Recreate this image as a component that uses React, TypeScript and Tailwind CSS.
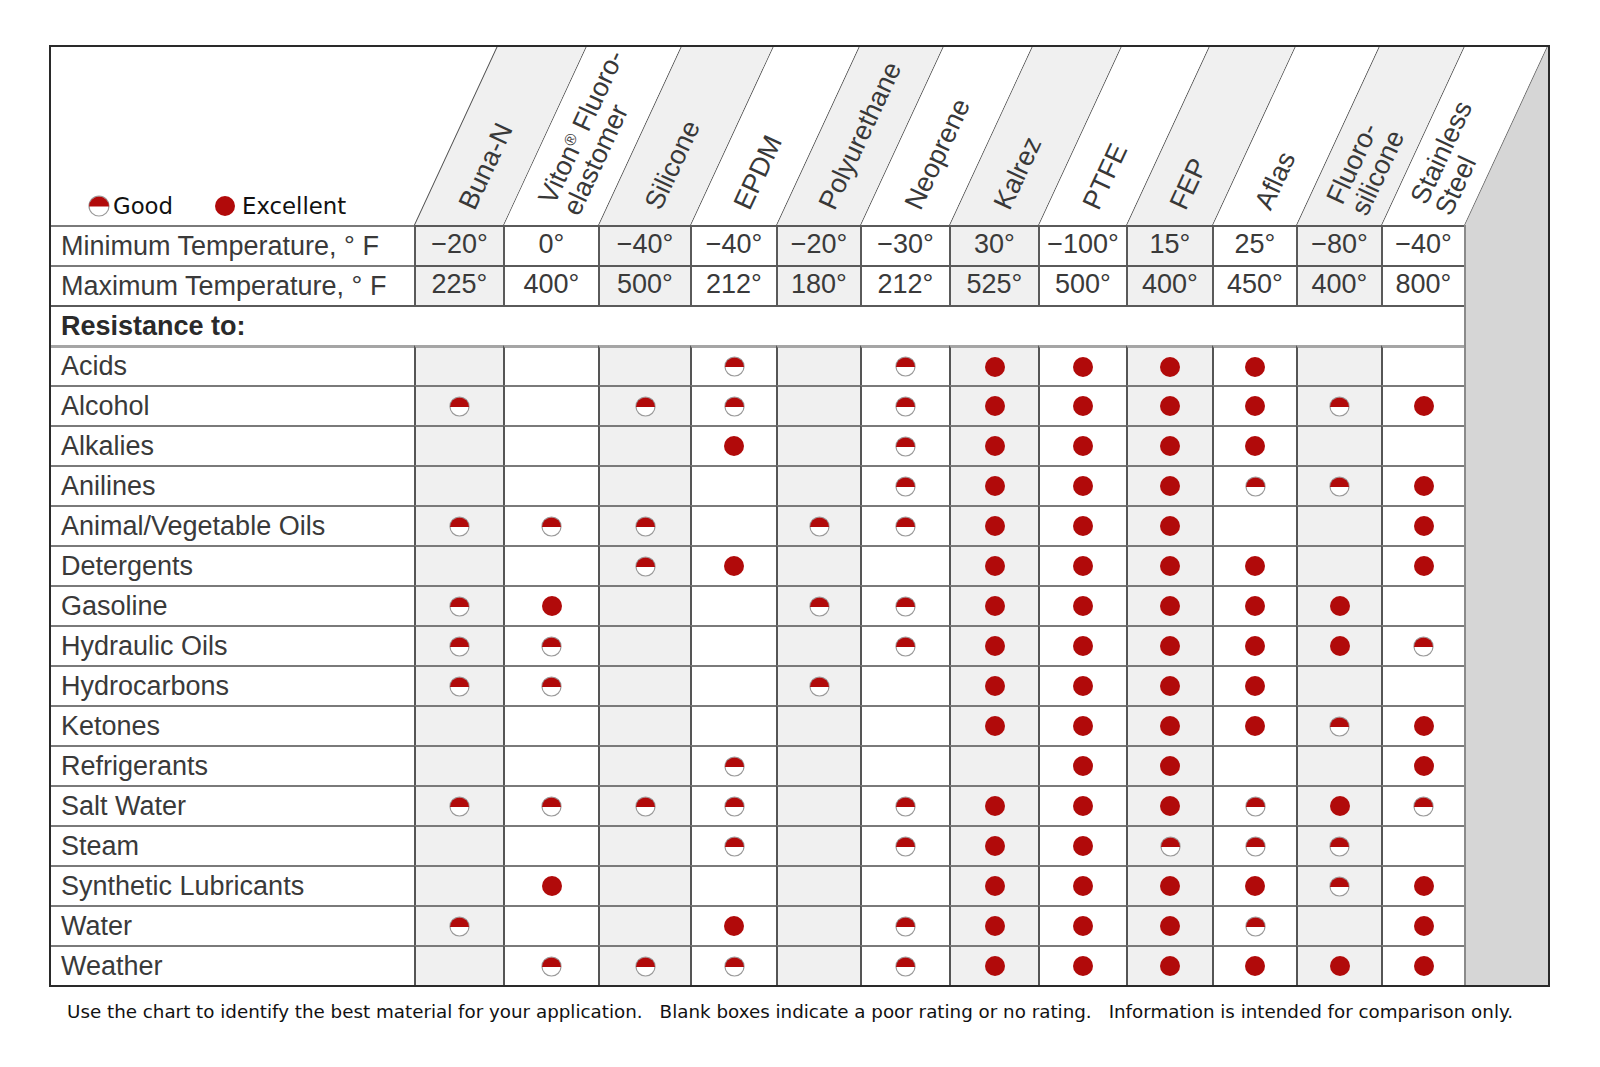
import type { ReactNode } from "react";

const RED = "#b10a0a";

type Column = {
  lines: ReactNode[];
  w: string;
  z: string;
  shade: boolean;
  min: string;
  max: string;
};

const columns: Column[] = [
  { lines: ["Buna-N"], w: "w-[89px]", z: "z-[12]", shade: true, min: "−20°", max: "225°" },
  {
    lines: [
      <>
        Viton<sup className="text-[16px]">®</sup> Fluoro-
      </>,
      "elastomer",
    ],
    w: "w-[95px]",
    z: "z-[11]",
    shade: false,
    min: "0°",
    max: "400°",
  },
  { lines: ["Silicone"], w: "w-[92px]", z: "z-[10]", shade: true, min: "−40°", max: "500°" },
  { lines: ["EPDM"], w: "w-[86px]", z: "z-[9]", shade: false, min: "−40°", max: "212°" },
  { lines: ["Polyurethane"], w: "w-[84px]", z: "z-[8]", shade: true, min: "−20°", max: "180°" },
  { lines: ["Neoprene"], w: "w-[89px]", z: "z-[7]", shade: false, min: "−30°", max: "212°" },
  { lines: ["Kalrez"], w: "w-[89px]", z: "z-[6]", shade: true, min: "30°", max: "525°" },
  { lines: ["PTFE"], w: "w-[88px]", z: "z-[5]", shade: false, min: "−100°", max: "500°" },
  { lines: ["FEP"], w: "w-[86px]", z: "z-[4]", shade: true, min: "15°", max: "400°" },
  { lines: ["Aflas"], w: "w-[84px]", z: "z-[3]", shade: false, min: "25°", max: "450°" },
  { lines: ["Fluoro-", "silicone"], w: "w-[85px]", z: "z-[2]", shade: true, min: "−80°", max: "400°" },
  { lines: ["Stainless", "Steel"], w: "w-[83px]", z: "z-[1]", shade: false, min: "−40°", max: "800°" },
];

// g = good, e = excellent, . = none
const rows: [string, string][] = [
  ["Acids", "...g.geeee.."],
  ["Alcohol", "g.gg.geeeege"],
  ["Alkalies", "...e.geeee.."],
  ["Anilines", ".....geeegge"],
  ["Animal/Vegetable Oils", "ggg.ggeee..e"],
  ["Detergents", "..ge..eeee.e"],
  ["Gasoline", "ge..ggeeeee."],
  ["Hydraulic Oils", "gg...geeeeeg"],
  ["Hydrocarbons", "gg..g.eeee.."],
  ["Ketones", "......eeeege"],
  ["Refrigerants", "...g...ee..e"],
  ["Salt Water", "gggg.geeegeg"],
  ["Steam", "...g.geeggg."],
  ["Synthetic Lubricants", ".e....eeeege"],
  ["Water", "g..e.geeeg.e"],
  ["Weather", ".ggg.geeeeee"],
];

function Good({ size = 21 }: { size?: number }) {
  return (
    <svg width={size} height={size} viewBox="0 0 22 22">
      <circle cx="11" cy="11" r="10" fill="#fff" stroke="#9a9a9a" strokeWidth="1.2" />
      <path d="M1 11.6 A10 10 0 0 1 21 11.6 Z" fill={RED} />
    </svg>
  );
}

function Excellent({ size = 20 }: { size?: number }) {
  return (
    <svg width={size} height={size} viewBox="0 0 20 20">
      <circle cx="10" cy="10" r="10" fill={RED} />
    </svg>
  );
}

function HeaderBand({ col }: { col: Column }) {
  return (
    <div
      className={`relative h-full shrink-0 origin-bottom border-l border-[#4a4a4a] [transform:skewX(-24.87deg)] ${col.w} ${col.z} ${
        col.shade ? "bg-[#f0f0f0]" : "bg-white"
      }`}
    >
      <div className="absolute bottom-[17px] left-1/2 h-0 w-0">
        <div className="absolute left-0 top-0 origin-top-left whitespace-nowrap text-[27px] leading-[27px] text-[#383838] [transform:skewX(24.87deg)_rotate(-65deg)_translateY(-50%)]">
          {col.lines.map((l, i) => (
            <div key={i}>{l}</div>
          ))}
        </div>
      </div>
    </div>
  );
}

function TempRow({ label, pick }: { label: string; pick: "min" | "max" }) {
  return (
    <div className="flex h-[40px]">
      <div className="flex w-[363px] shrink-0 items-center border-t-2 border-[#7a7a7a] pl-[10px]">
        {label}
      </div>
      {columns.map((c, i) => (
        <div
          key={i}
          className={`flex shrink-0 items-center justify-center border-l-2 border-t-2 border-[#5a5a5a] pb-[3px] ${c.w} ${
            c.shade ? "bg-[#f0f0f0]" : "bg-white"
          }`}
        >
          {c[pick]}
        </div>
      ))}
      <div className="flex-1 border-l-2 border-[#8a8a8a] bg-[#d6d6d6]" />
    </div>
  );
}

function DataRow({ label, marks, first }: { label: string; marks: string; first: boolean }) {
  const top = first ? "border-t-[3px] border-[#a5a5a5]" : "border-t-2 border-[#7a7a7a]";
  return (
    <div className="flex h-[40px]">
      <div className={`flex w-[363px] shrink-0 items-center pl-[10px] ${top}`}>{label}</div>
      {columns.map((c, i) => (
        <div
          key={i}
          className={`flex shrink-0 items-center justify-center border-l-2 border-l-[#555] ${top} ${c.w} ${
            c.shade ? "bg-[#f0f0f0]" : "bg-white"
          }`}
        >
          {marks[i] === "g" && <Good />}
          {marks[i] === "e" && <Excellent />}
        </div>
      ))}
      <div className="flex-1 border-l-2 border-[#8a8a8a] bg-[#d6d6d6]" />
    </div>
  );
}

export default function App() {
  return (
    <div className="h-[1067px] w-[1600px] bg-white pl-[49px] pt-[45px]">
      <div className="w-[1501px] overflow-hidden border-2 border-[#2a2a2a] bg-white font-['Liberation_Sans',Arial,sans-serif] text-[27px] text-[#3a3a3a]">
        <div className="flex h-[178px]">
          <div className="flex w-[363px] shrink-0 items-end pb-[6px] pl-[37px] font-['DejaVu_Sans',sans-serif] text-[22.8px] leading-[26px] text-[#111]">
            <div className="flex items-center gap-[3px]">
              <Good size={22} />
              <span>Good</span>
            </div>
            <div className="ml-[42px] flex items-center gap-[7px]">
              <Excellent size={20} />
              <span>Excellent</span>
            </div>
          </div>
          {columns.map((c, i) => (
            <HeaderBand key={i} col={c} />
          ))}
          <div className="h-full w-[300px] shrink-0 origin-bottom border-l border-[#6a6a6a] bg-[#d6d6d6] [transform:skewX(-24.87deg)]" />
        </div>
        <TempRow label="Minimum Temperature, ° F" pick="min" />
        <TempRow label="Maximum Temperature, ° F" pick="max" />
        <div className="flex h-[40px]">
          <div className="flex w-[1413px] shrink-0 items-center border-t-2 border-[#5a5a5a] pl-[10px] font-bold text-[#2a2a2a]">
            Resistance to:
          </div>
          <div className="flex-1 border-l-2 border-[#8a8a8a] bg-[#d6d6d6]" />
        </div>
        {rows.map(([label, marks], i) => (
          <DataRow key={label} label={label} marks={marks} first={i === 0} />
        ))}
      </div>
      <div className="mt-[14px] flex gap-[17px] pl-[18px] font-['DejaVu_Sans',sans-serif] text-[18.3px] leading-[22px] text-[#111]">
        <span>Use the chart to identify the best material for your application.</span>
        <span>Blank boxes indicate a poor rating or no rating.</span>
        <span>Information is intended for comparison only.</span>
      </div>
    </div>
  );
}
